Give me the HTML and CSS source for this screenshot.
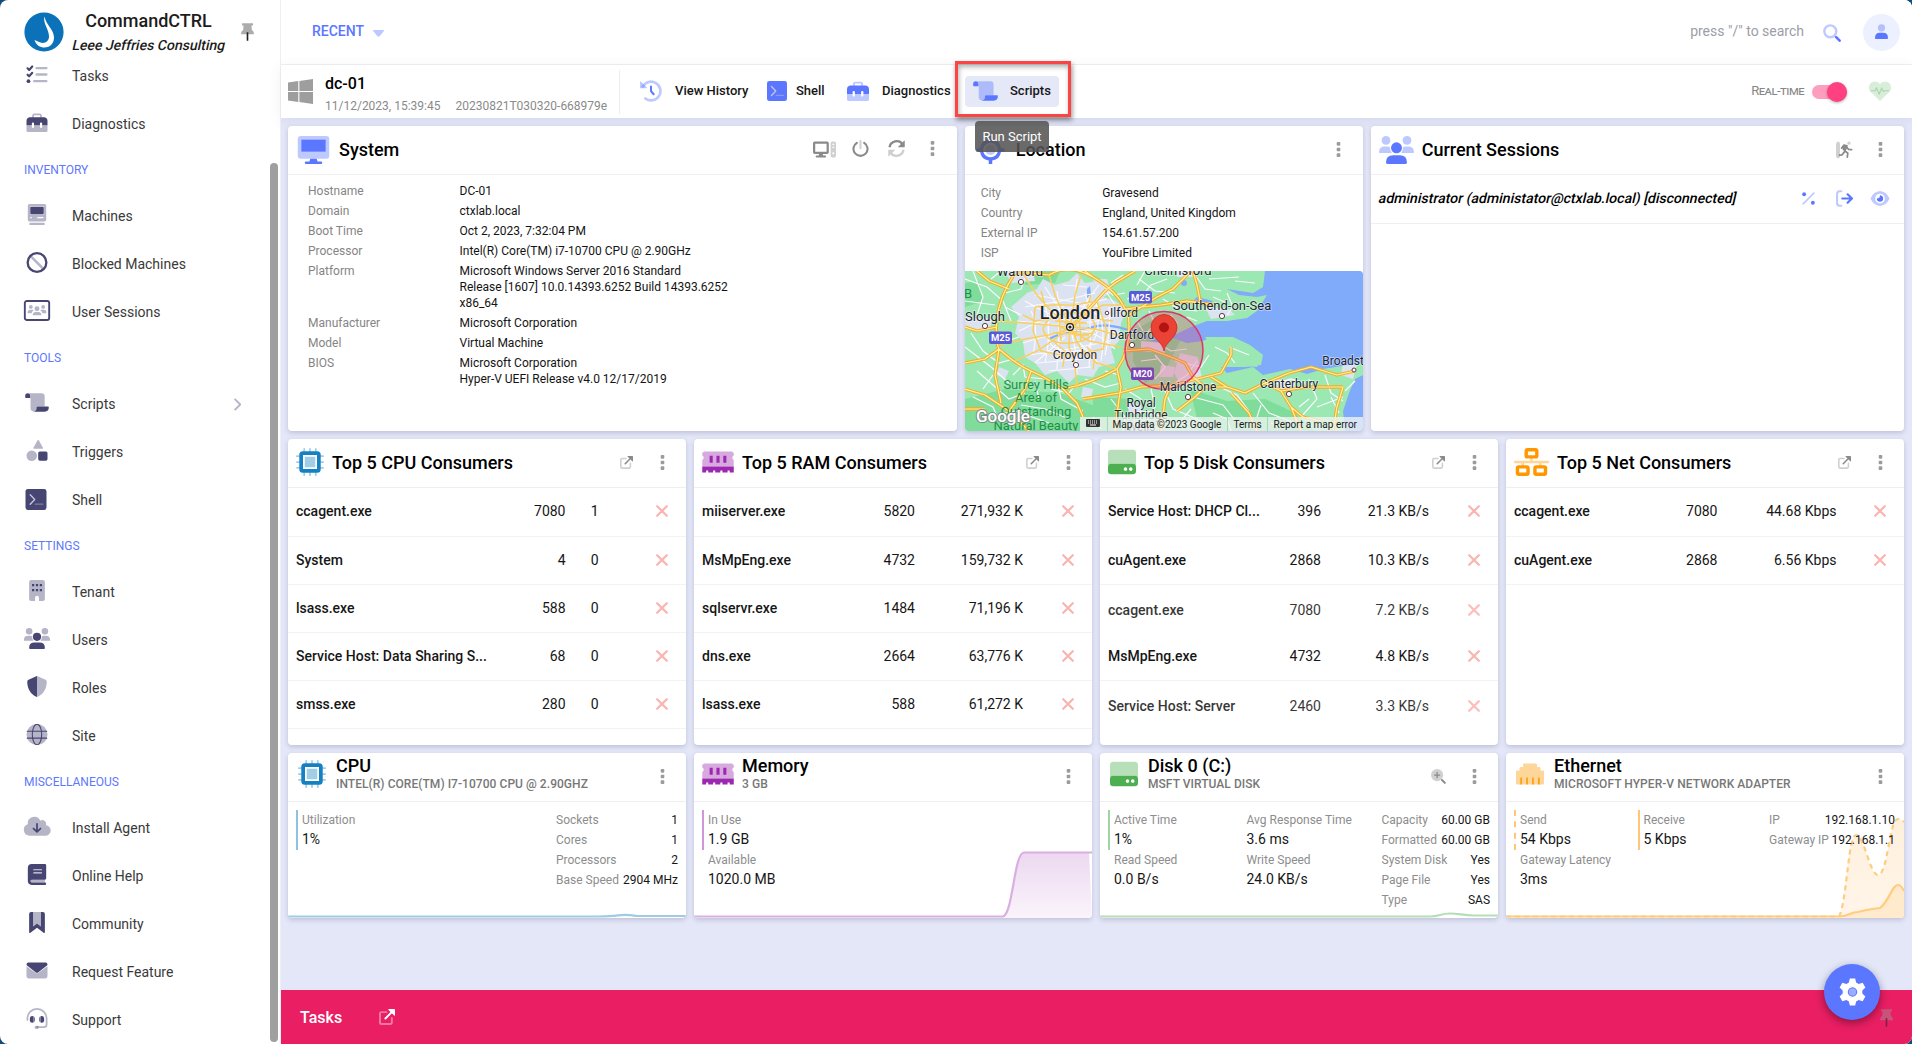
FILE: index.html
```html
<!DOCTYPE html>
<html lang="en">
<head>
<meta charset="utf-8">
<title>CommandCTRL - dc-01</title>
<link rel="stylesheet" href="styles.css">
</head>
<body>
<svg class="defs" width="0" height="0">
  <symbol id="tasks" viewBox="0 0 512 512"><g class="ln" stroke-width="52"><path d="M25 105l40 40 75-85M25 260l40 40 75-85"/></g><circle cx="48" cy="420" r="46"/><g class="ln s" stroke-width="56"><path d="M245 102h240M245 256h240M188 418h297"/></g></symbol>
  <symbol id="toolbox" viewBox="0 0 512 512"><path class="ln s" stroke-width="44" d="M160 130V90q0-30 30-30h132q30 0 30 30v40"/><path fill-rule="evenodd" d="M75 130h362q75 10 75 90v105H382v-45q0-26-27-26t-27 26v45H184v-45q0-26-27-26t-27 26v45H0V220q0-80 75-90z"/><path class="s" d="M0 325h130v38q0 26 27 26t27-26v-38h144v38q0 26 27 26t27-26v-38h130v130q0 33-33 33H33q-33 0-33-33z"/></symbol>
  <symbol id="machine" viewBox="0 0 448 512"><path class="s" fill-rule="evenodd" d="M40 0h368q40 0 40 40v345q0 40-40 40H40q-40 0-40-40V40Q0 0 40 0zM60 55v200h328V55zM230 315v32h150v-32zM60 315v32h36v-32zM40 455h368v57H40z"/><rect x="60" y="65" width="328" height="185" rx="25"/></symbol>
  <symbol id="ban" viewBox="0 0 512 512"><path class="ln s" stroke-width="62" d="M125 125l262 262"/><circle class="ln" stroke-width="56" cx="256" cy="256" r="228"/></symbol>
  <symbol id="sessions" viewBox="0 0 640 512"><rect class="ln" stroke-width="46" x="23" y="23" width="594" height="466" rx="50"/><g class="s"><circle cx="170" cy="170" r="46"/><circle cx="470" cy="170" r="46"/><circle cx="320" cy="215" r="60"/><path d="M215 370q0-80 75-80h60q75 0 75 80zM90 320q0-80 70-80h45q25 0 35 18-50 18-50 62zM550 320q0-80-70-80h-45q-25 0-35 18 50 18 50 62z"/></g></symbol>
  <symbol id="scroll" viewBox="0 0 576 512"><path class="s" d="M70 28H400q75 0 75 76v248H275v48q0 75-60 75-85 0-85-85V104q0-76-60-76z"/><path d="M0 95q0-65 62-65t62 65v50H20q-20 0-20-20zM275 372q0-17 20-17h264q17 0 17 17 0 105-100 108H195q80-6 80-85z"/></symbol>
  <symbol id="shapes" viewBox="0 0 512 512"><path class="s" d="M267 15q18-28 36 0l95 170q16 30-18 30H188q-32 0-16-30z"/><circle class="s" cx="128" cy="384" r="128"/><rect x="285" y="278" width="227" height="227" rx="40"/></symbol>
  <symbol id="shell" viewBox="0 0 512 512"><rect width="512" height="512" rx="60"/><g class="ln shell-ln" stroke-width="34"><path d="M115 140l110 115-110 115"/><path class="dim" d="M240 370h180"/></g></symbol>
  <symbol id="building" viewBox="0 0 384 512"><path class="s" d="M48 0h288q48 0 48 48v416q0 48-48 48h-96v-80q0-48-48-48t-48 48v80H48q-48 0-48-48V48Q0 0 48 0z"/><path d="M70 96h54v54H70zM165 96h54v54h-54zM260 96h54v54h-54zM70 222h54v54H70zM165 222h54v54h-54zM260 222h54v54h-54z"/></symbol>
  <symbol id="users" viewBox="0 0 640 512"><g class="s"><circle cx="128" cy="80" r="80"/><circle cx="512" cy="80" r="80"/><path d="M0 298q0-108 107-108h43q30 0 52 14-6 62 33 108H14q-14 0-14-14zM640 298q0-108-107-108h-43q-30 0-52 14 6 62-33 108h221q14 0 14-14z"/></g><circle cx="320" cy="216" r="100"/><path d="M128 485q0-133 133-133h118q133 0 133 133 0 27-27 27H155q-27 0-27-27z"/></symbol>
  <symbol id="shield" viewBox="0 0 512 512"><path d="M256 0v512C100 450 20 310 18 140q0-36 30-48L240 4q8-4 16-4z"/><path class="s" d="M256 0v512c156-62 236-202 238-372q0-36-30-48L272 4q-8-4-16-4z"/></symbol>
  <symbol id="globe" viewBox="0 0 512 512"><circle class="s" cx="256" cy="256" r="256"/><g class="ln" stroke-width="26"><path d="M18 175h476M18 345h476"/><ellipse cx="256" cy="256" rx="115" ry="250"/></g></symbol>
  <symbol id="cloud" viewBox="0 0 640 512"><path class="s" d="M144 480A144 144 0 0 1 96 200 160 160 0 0 1 400 113a96 96 0 0 1 139 112A128 128 0 0 1 512 480z"/><path class="ln" stroke-width="42" d="M320 190v185M235 305l85 82 85-82"/></symbol>
  <symbol id="book" viewBox="0 0 448 512"><path d="M96 0h320q32 0 32 32v320q0 25-32 32H96q-32 3-32 32 0 32 32 32h320q32 0 32 32t-32 32H96Q0 505 0 416V96Q0 0 96 0z"/><path class="s" d="M96 384h320v64H96q-32 0-32-32t32-32z"/><path d="M145 140h190M145 215h190" stroke="#dcdce8" stroke-width="28" stroke-linecap="round"/></symbol>
  <symbol id="bookmark" viewBox="0 0 384 512"><path class="s" d="M96 0h192v355l-96-75-96 75z"/><path d="M48 0h48v355l96-75 96 75V0h48q48 0 48 48v440q0 36-32 18L192 385 32 506Q0 524 0 488V48Q0 0 48 0z"/></symbol>
  <symbol id="envelope" viewBox="0 0 512 512"><path class="s" d="M0 150l230 165q26 18 52 0l230-165v234q0 64-64 64H64q-64 0-64-64z"/><path d="M48 60h416q48 0 48 48 0 20-20 35L282 305q-26 18-52 0L20 143Q0 128 0 108 0 60 48 60z"/></symbol>
  <symbol id="headset" viewBox="0 0 512 512"><path class="ln s" stroke-width="42" d="M22 290v-34a234 234 0 0 1 468 0v145q0 65-65 65H260"/><path class="s" d="M200 430h90v82h-50q-45 0-45-41t45-41z"/><rect x="82" y="195" width="118" height="165" rx="58"/><rect x="312" y="195" width="118" height="165" rx="58"/><path fill="#fff" opacity=".6" d="M165 195h14v165h-14zM333 195h14v165h-14z"/></symbol>
  <symbol id="pin" viewBox="0 0 384 512"><path class="s2" d="M30 0h324v64h-45l12 135q60 33 63 105 0 20-20 20H20Q0 324 0 304q3-72 63-105L75 64H30z"/><path class="pin-needle" d="M168 260h48v252h-48z"/></symbol>
  <symbol id="history" viewBox="0 0 512 512"><path class="ln s" stroke-width="62" d="M65 155A218 218 0 1 1 125 430"/><path class="s" d="M0 45q0-20 18-8l145 135q12 18-10 20H20q-20 0-20-20z"/><path class="ln" stroke-width="46" d="M256 150v110l62 72"/></symbol>
  <symbol id="search" viewBox="0 0 512 512"><circle class="ln s" stroke-width="68" cx="208" cy="208" r="170"/><path class="ln" stroke-width="74" d="M375 375l98 98"/></symbol>
  <symbol id="user" viewBox="0 0 448 512"><circle class="s" cx="224" cy="130" r="125"/><path d="M0 480q0-180 170-180h108q170 0 170 180 0 32-32 32H32q-32 0-32-32z"/></symbol>
  <symbol id="windows" viewBox="0 0 448 448"><path d="M0 63l184-26v178H0zM204 34L448 0v215H204zM0 235h184v178L0 387zM204 235h244v213l-244-34z"/></symbol>
  <symbol id="heart" viewBox="0 0 512 512"><path class="hs" d="M256 490L40 282C-22 215-10 100 65 55 135 15 210 40 256 95 302 40 377 15 447 55c75 45 87 160 25 227z"/><path class="ln" stroke-width="26" d="M50 250h90l35-70 60 150 60-145 35 85 25-20h100"/></symbol>
  <symbol id="monitor" viewBox="0 0 576 512"><path class="s" fill-rule="evenodd" d="M60 0h456q60 0 60 60v296q0 60-60 60H60q-60 0-60-60V60Q0 0 60 0zM64 64v224h448V64z"/><path d="M64 64h448v224H64zM230 416h116l16 48h62q24 0 24 24t-24 24H152q-24 0-24-24t24-24h62z"/></symbol>
  <symbol id="desktop" viewBox="0 0 640 512"><path fill-rule="evenodd" d="M50 32h340q50 0 50 50v252q0 50-50 50H270l12 40h60q24 0 24 28t-24 28H98q-24 0-24-28t24-28h60l12-40H50q-50 0-50-50V82q0-50 50-50zM62 96v224h316V96z"/><path class="s" fill-rule="evenodd" d="M540 32h50q50 0 50 50v348q0 50-50 50h-50q-50 0-50-50V82q0-50 50-50zM540 96v34h50V96zM540 180v34h50v-34zM565 330a30 30 0 1 0 .1 0z"/></symbol>
  <symbol id="power" viewBox="0 0 512 512"><path class="ln" stroke-width="62" d="M145 85a212 212 0 1 0 222 0"/><path class="ln s" stroke-width="60" d="M256 32v220"/></symbol>
  <symbol id="refresh" viewBox="0 0 512 512"><path class="ln butt" stroke-width="68" d="M45 220C80 20 330-20 430 120"/><path d="M505 30v170q0 22-22 22H315q-20-5-8-22L485 20q20-8 20 10z"/><g class="s"><path class="ln butt" stroke-width="68" d="M467 292C432 492 182 532 82 392"/><path d="M7 482V312q0-22 22-22h168q20 5 8 22L27 492q-20 8-20-10z"/></g></symbol>
  <symbol id="kebab" viewBox="0 0 128 512"><rect class="s2" y="32" x="10" width="108" height="108" rx="24"/><rect class="s2" y="202" x="10" width="108" height="108" rx="24"/><rect class="s2" y="372" x="10" width="108" height="108" rx="24"/></symbol>
  <symbol id="location" viewBox="0 0 512 512"><path fill-rule="evenodd" d="M224 0h64v64q140 20 160 160h64v64h-64q-20 140-160 160v64h-64v-64Q84 428 64 288H0v-64h64Q84 84 224 64zM256 122a134 134 0 1 0 .1 0z"/><circle class="s" cx="256" cy="256" r="92"/></symbol>
  <symbol id="door" viewBox="0 0 512 512"><path class="s" d="M60 0q60 10 60 60v392q0 50-60 60-60-20-60-90V90Q0 20 60 0z"/><circle class="s" cx="390" cy="50" r="48"/><g class="ln" stroke-width="52"><path d="M170 200l70-90 90 20-70 150 95 70-15 120M245 320l-60 80-80 10M320 170l60 70 90 5"/></g><path d="M225 110l110 15-50 175-90-50z"/></symbol>
  <symbol id="percent" viewBox="0 0 448 512"><path class="ln s" stroke-width="56" d="M405 75L43 437"/><circle cx="75" cy="110" r="66"/><circle cx="373" cy="402" r="66"/></symbol>
  <symbol id="exit" viewBox="0 0 512 512"><path class="ln s" stroke-width="62" d="M160 40h-50q-78 0-78 78v276q0 78 78 78h50"/><path class="ln" stroke-width="66" d="M190 256h285M350 130l130 126-130 126"/></symbol>
  <symbol id="eye" viewBox="0 0 576 512"><path class="s" fill-rule="evenodd" d="M288 32Q100 45 0 256q100 211 288 224 188-13 288-224Q476 45 288 32zM288 112a144 144 0 1 1-.1 0z"/><path d="M288 160q0 96-96 96 5 96 96 96t96-96q-5-90-96-96z"/></symbol>
  <symbol id="cpu" viewBox="0 0 512 512"><path class="ln s" stroke-width="32" d="M150 16v70M256 16v70M362 16v70M150 426v70M256 426v70M362 426v70M16 150h70M16 256h70M16 362h70M426 150h70M426 256h70M426 362h70"/><path fill-rule="evenodd" d="M124 60h264q64 0 64 64v264q0 64-64 64H124q-64 0-64-64V124q0-64 64-64zM128 128v256h256V128z"/><rect class="s" x="160" y="160" width="192" height="192"/></symbol>
  <symbol id="ram" viewBox="0 0 576 512"><path class="s" d="M50 64h476q50 0 50 50v25q-55 35 0 85v116H0V224q55-50 0-85v-25q0-50 50-50z"/><path d="M135 140h56v130h-56zM260 140h56v130h-56zM385 140h56v130h-56zM0 340h576v108h-75v-35h-38v35h-94v-35h-38v35h-94v-35h-38v35h-90v-35H71v35H0z"/></symbol>
  <symbol id="disk" viewBox="0 0 512 512"><path class="s" d="M60 32h392q60 0 60 60v230q-20-34-60-34H60q-40 0-60 34V92q0-60 60-60z"/><path fill-rule="evenodd" d="M60 288h392q60 0 60 60v72q0 60-60 60H60q-60 0-60-60v-72q0-60 60-60zM320 352a32 32 0 1 0 .1 0zM416 352a32 32 0 1 0 .1 0z"/></symbol>
  <symbol id="network" viewBox="0 0 640 512"><path class="s" d="M16 232h608q16 0 16 24t-16 24H504v50h-48v-50H184v50h-48v-50H16Q0 280 0 256t16-24zM296 170h48v70h-48z"/><g class="ln" stroke-width="62"><rect x="223" y="31" width="194" height="132" rx="22"/><rect x="63" y="345" width="194" height="136" rx="22"/><rect x="383" y="345" width="194" height="136" rx="22"/></g></symbol>
  <symbol id="ethernet" viewBox="0 0 512 512"><path class="s" d="M0 216q0-24 24-24h40v-40q0-24 24-24h40V88q0-24 24-24h208q24 0 24 24v40h40q24 0 24 24v40h40q24 0 24 24v208q0 24-24 24H24q-24 0-24-24z"/><path d="M80 320h28v128H80zM188 320h28v128h-28zM296 320h28v128h-28zM404 320h28v128h-28z"/></symbol>
  <symbol id="external" viewBox="0 0 512 512"><path class="ln s" stroke-width="62" d="M240 100H80q-48 0-48 48v280q0 50 48 50h280q50 0 50-50V290"/><path class="ln" stroke-width="62" d="M205 305L440 70"/><path d="M310 0h178q24 0 24 24v178q-5 24-28 8L302 28q-12-20 8-28z"/></symbol>
  <symbol id="xmark" viewBox="0 0 320 320"><path class="ln" stroke-width="60" d="M32 32l256 256M288 32L32 288"/></symbol>
  <symbol id="zoomin" viewBox="0 0 512 512"><circle class="s" cx="208" cy="208" r="208"/><path class="ln" stroke-width="44" d="M208 120v176M120 208h176"/><path class="ln" stroke-width="68" d="M375 375l98 98"/></symbol>
  <symbol id="gear" viewBox="0 0 512 512"><path fill-rule="evenodd" d="M205 0h102l18 78 48 28 76-24 51 90-58 54v60l58 54-51 90-76-24-48 28-18 78H205l-18-78-48-28-76 24-51-90 58-54v-60L12 172l51-90 76 24 48-28zM256 166a90 90 0 1 0 .1 0z"/><circle class="s" cx="256" cy="256" r="70"/></symbol>
  <symbol id="chevron" viewBox="0 0 256 512"><path class="ln butt" stroke-width="62" d="M30 60l190 196L30 452"/></symbol>
</svg>

<div class="app">
  <aside class="sidebar">
    <header class="brand">
      <svg class="logo" viewBox="0 0 40 40"><circle cx="20" cy="20" r="19.6" fill="#0b72b9"/><path d="M20.500 4.500C18.500 11 25 17 25 24.500C25 29.500 20.500 32 16.500 30.500C13.500 29.500 12 28.500 10.500 28C12 33 16 35.500 20.500 35.500C26 35.500 30 31.500 30 25.500C30 17.500 22 13 20.500 4.500Z" fill="#fff"/></svg>
      <div class="brand-text"><div class="brand-name">CommandCTRL</div><div class="brand-org slant">Leee Jeffries Consulting</div></div>
      <svg class="brand-pin"><use href="#pin"/></svg>
    </header>
    <div class="nav-wrap">
      <nav class="nav">
        <a class="nav-item"><svg><use href="#tasks"/></svg><span>Tasks</span></a>
        <a class="nav-item"><svg><use href="#toolbox"/></svg><span>Diagnostics</span></a>
        <h4>INVENTORY</h4>
        <a class="nav-item"><svg><use href="#machine"/></svg><span>Machines</span></a>
        <a class="nav-item"><svg><use href="#ban"/></svg><span>Blocked Machines</span></a>
        <a class="nav-item"><svg><use href="#sessions"/></svg><span>User Sessions</span></a>
        <h4>TOOLS</h4>
        <a class="nav-item"><svg><use href="#scroll"/></svg><span>Scripts</span><svg class="chev"><use href="#chevron"/></svg></a>
        <a class="nav-item"><svg><use href="#shapes"/></svg><span>Triggers</span></a>
        <a class="nav-item"><svg class="nudge"><use href="#shell"/></svg><span>Shell</span></a>
        <h4>SETTINGS</h4>
        <a class="nav-item"><svg><use href="#building"/></svg><span>Tenant</span></a>
        <a class="nav-item"><svg><use href="#users"/></svg><span>Users</span></a>
        <a class="nav-item"><svg><use href="#shield"/></svg><span>Roles</span></a>
        <a class="nav-item"><svg><use href="#globe"/></svg><span>Site</span></a>
        <h4>MISCELLANEOUS</h4>
        <a class="nav-item"><svg><use href="#cloud"/></svg><span>Install Agent</span></a>
        <a class="nav-item"><svg><use href="#book"/></svg><span>Online Help</span></a>
        <a class="nav-item"><svg><use href="#bookmark"/></svg><span>Community</span></a>
        <a class="nav-item"><svg><use href="#envelope"/></svg><span>Request Feature</span></a>
        <a class="nav-item"><svg><use href="#headset"/></svg><span>Support</span></a>
      </nav>
      <div class="rail"><div class="thumb"></div></div>
    </div>
  </aside>

  <div class="main">
    <header class="topbar">
      <div class="recent">RECENT <i class="caret"></i></div>
      <div class="search">press "/" to search</div>
      <svg class="search-icon"><use href="#search"/></svg>
      <div class="avatar"><svg><use href="#user"/></svg></div>
    </header>

    <div class="devicebar">
      <svg class="os"><use href="#windows"/></svg>
      <div class="device">
        <div class="device-name">dc-01</div>
        <div class="device-meta"><span>11/12/2023, 15:39:45</span><span>20230821T030320-668979e</span></div>
      </div>
      <div class="tools">
        <button class="tool history"><svg><use href="#history"/></svg>View History</button>
        <button class="tool term"><svg><use href="#shell"/></svg>Shell</button>
        <button class="tool diag"><svg><use href="#toolbox"/></svg>Diagnostics</button>
        <button class="tool scripts"><svg><use href="#scroll"/></svg>Scripts<span class="highlight"></span><span class="tooltip">Run Script</span></button>
      </div>
      <span class="rt">Real-time</span>
      <span class="toggle"><i></i></span>
      <svg class="heart"><use href="#heart"/></svg>
    </div>

    <main class="grid">
      <section class="card c-system">
        <header class="head tall"><svg class="hi fw blue"><use href="#monitor"/></svg><h2>System</h2>
          <div class="acts"><svg class="w22"><use href="#desktop"/></svg><svg><use href="#power"/></svg><svg><use href="#refresh"/></svg><svg><use href="#kebab"/></svg></div></header>
        <dl class="facts sys">
          <dt>Hostname</dt><dd>DC-01</dd>
          <dt>Domain</dt><dd>ctxlab.local</dd>
          <dt>Boot Time</dt><dd>Oct 2, 2023, 7:32:04 PM</dd>
          <dt>Processor</dt><dd>Intel(R) Core(TM) i7-10700 CPU @ 2.90GHz</dd>
          <dt>Platform</dt><dd>Microsoft Windows Server 2016 Standard<br>Release [1607] 10.0.14393.6252 Build 14393.6252<br>x86_64</dd>
          <dt>Manufacturer</dt><dd>Microsoft Corporation</dd>
          <dt>Model</dt><dd>Virtual Machine</dd>
          <dt>BIOS</dt><dd>Microsoft Corporation<br>Hyper-V UEFI Release v4.0 12/17/2019</dd>
        </dl>
      </section>

      <section class="card c-location">
        <header class="head tall"><svg class="hi fw blue"><use href="#location"/></svg><h2>Location</h2><div class="acts"><svg><use href="#kebab"/></svg></div></header>
        <dl class="facts loc">
          <dt>City</dt><dd>Gravesend</dd>
          <dt>Country</dt><dd>England, United Kingdom</dd>
          <dt>External IP</dt><dd>154.61.57.200</dd>
          <dt>ISP</dt><dd>YouFibre Limited</dd>
        </dl>
        <svg class="map" viewBox="0 0 398 160">
          <defs><path id="roads" d="M50 2Q34 26 32 48T34 78Q52 94 66 100T98 118Q128 112 152 98L158 88Q164 74 164 56T160 38Q152 20 128 6T84 4M32 56L12 60L0 56M34 78L20 88L0 92M44 18L24 10L12 0M0 118L20 124L44 140L64 160M98 118L112 132L118 146M152 98L156 116L154 128L150 160M158 80L184 78L206 86L220 92L228 106L240 116L262 116L280 122L300 112L324 102M160 38L176 36L196 34L222 30L250 34M164 44L192 26L208 18L226 0M106 56L122 40L140 20L150 12L170 0M228 0L232 14L236 34M154 122L176 116L208 114L240 106L256 102L266 84L266 76M206 114L200 128L196 160M324 102L346 96L372 104L390 100M300 112L316 120L340 116L378 116M316 120L326 136L338 146L356 150M378 116L372 136L368 160M118 128L154 122M240 116L230 126L212 140M266 122L284 142L292 160M0 138L20 138M84 4L64 2L50 2M34 78L30 104L36 132M66 100L60 118L44 140M128 6L120 0M262 116L246 106M336 160L326 136"/></defs>
          <rect width="398" height="160" fill="#9ce8b2"/>
          <g fill="#7fdc9a"><path d="M0 128L40 118L95 122L130 135L128 160H0zM60 0L95 0L90 12L60 14zM128 126L165 128L170 160H128zM225 118L262 130L300 128L330 142L350 160H235zM0 12L14 10L18 30L0 36zM168 60L200 42L215 70L200 100L180 112L168 90z"/></g>
          <path fill="#dbe3f1" d="M62 22L72 18L78 8L90 14L104 10L112 2L120 12L132 10L138 26L150 30L162 38L156 52L154 70L146 78L150 92L134 96L128 106L112 104L104 112L92 100L80 104L70 92L60 86L58 70L50 62L54 46L46 36z"/>
          <path fill="#dbe3f1" d="M128 8l14 0 4 14-12 6zM215 82l18 4 4 22-20 8-8-14zM240 36l24 2 6 6-24 4zM0 46l28 2-4 12-24-2zM40 0l28 0 2 10-24 2zM212 0l20 0-2 6-18 0zM312 108l18 2 0 10-18 0zM378 92l14 2-4 14-12-4zM176 70l22 2 2 10-24-2zM196 94l14 2-2 10-14 0zM118 116l10 2-2 10-10-2zM34 96l10 4-4 8-8-4zM162 132l14 2 0 10-12-2z"/>
          <g fill="#80abfb">
            <path d="M300 0H398V92L384 94L358 98L342 103L325 98L298 104L288 96L262 102L256 96L280 96L296 94L298 84L285 74L268 66L246 66L238 70L222 72L205 66L226 56L242 50L262 50L282 47L292 40L302 24L292 26L274 24L262 18L288 22L298 16z"/>
            <path d="M398 92V160H380L378 140L384 122L390 108L398 104z"/>
            <circle cx="219" cy="12" r="3"/><path d="M122 18l3-3 1 8-4 4zM232 26l16 4-6 6-14-6z"/>
          </g>
          <path fill="none" stroke="#80abfb" stroke-width="2.2" d="M206 69Q190 72 182 66T160 58Q140 52 128 56T106 60Q96 62 84 68"/>
          <path fill="#9ce8b2" d="M240 66l18 0 24 10 14 12-4 8-20-2-18-10z"/>
          <g fill="none" stroke="#fbf8ff" stroke-width="1.2">
            <path d="M60 30Q85 45 105 50T150 44M52 50Q80 52 105 56T156 62M58 72Q82 64 105 60T150 78M70 92Q86 78 100 66M112 104Q112 80 106 60M135 94Q120 78 108 64M80 16Q92 34 102 50M112 8Q110 30 106 50M134 14Q120 32 110 50M66 40Q74 54 68 84M78 28Q88 54 80 92M92 20Q96 40 92 98M120 22Q128 44 124 96M130 30Q142 54 136 90M144 36Q146 60 140 84M54 60L100 38L142 28M64 84L104 78L146 70M72 92L118 88M70 24L136 36M60 36L96 30L130 22M84 100L126 96M98 14L122 16M100 34Q120 32 132 44Q136 62 124 76Q104 86 86 74Q80 56 86 44z"/>
            <path d="M0 8L22 16L38 30L46 50M8 0L18 26L12 44M0 30L30 34M6 62L18 80L34 92L48 88M0 76L26 96L44 112M12 100L44 128L60 122M22 146L50 140L84 152M92 108L96 128L118 140M70 110L74 128M120 108L140 116L156 112M146 128L160 146L158 160M186 118L190 136L182 150M200 120L208 138L232 148L252 160M228 126L258 134L272 152M246 112L272 124L284 140M288 122L304 142L330 152M344 108L352 128L336 146M360 104L366 122L378 130M190 84L200 96L190 108M176 90L192 88M210 90L236 96L244 84M146 12L158 4M162 28L178 24L186 14L202 8M174 8L190 20L210 22M230 4L240 18L256 20M198 28L214 38L232 40M244 8L274 6M180 0L172 14M262 22L268 36L262 44M264 76L284 84M306 114L326 108L340 112M352 136L378 126M140 100L154 104M160 118L176 128M210 112L222 104L232 90"/>
            <path d="M24 64L36 72L54 66M40 36L56 44M26 8L36 0M60 6L56 18L40 22M48 104L58 94L60 106L80 108M86 118L104 122L112 112M136 12L148 24L160 22M150 34L142 22M28 104L18 118M8 126L28 136L34 150M56 134L80 138L104 148M128 146L136 158M166 142L184 140L196 146M216 150L226 138M248 142L262 148L266 160M296 134L292 146M306 152L322 158M344 128L334 136M366 126L374 142M390 110L380 120M250 76L262 82L270 92M222 46L232 50M206 44L212 52L202 60M184 40L190 52L182 62M172 50L178 60M196 74L206 80L222 78M172 104L184 106M270 10L290 12M248 26L262 32"/>
          </g>
          <use href="#roads" class="road-edge"/>
          <use href="#roads" class="road-core"/>
          <g fill="none" stroke="#f9cf5d" stroke-width="1.5">
            <path d="M32 50L60 52L84 54L105 56L130 58L160 66M34 74L60 68L84 64L105 58L124 70L156 76M84 4L90 24L98 42L105 56L104 76L110 94L112 118M56 0L72 24L88 42L105 56L120 44L138 34L160 34M50 90L72 80L90 68L105 56M116 4L110 24L108 40L105 56L116 78L132 92L152 98M70 36L88 34L110 34L132 30M70 36L68 60L76 80L96 84L118 82L138 78L142 60L132 30M78 58Q82 44 104 42T130 54Q130 70 106 72T78 58M90 50L122 52M88 62L124 64M94 46L96 70M114 44L116 70M96 56L112 64L128 62M100 48L112 56L110 68M90 72L100 80L98 96M122 76L130 84L128 98M58 44L70 50L84 48M132 48L148 50M126 24L122 38M76 20L80 34"/>
          </g>
          <circle cx="199" cy="79.500" r="39" fill="#e0446a" fill-opacity=".3" stroke="#e0336b" stroke-width="1.5"/>
          <g fill="#5b59d8"><rect x="164" y="20" width="23" height="12.500" rx="2"/><rect x="24" y="60.500" width="23" height="12.500" rx="2"/></g><rect x="166" y="96.500" width="23" height="12.500" rx="2" fill="#7a45b4"/>
          <g class="shield-t"><text x="175.500" y="29.700">M25</text><text x="35.500" y="70.200">M25</text><text x="177.500" y="106.200">M20</text></g>
          <g class="area"><text x="71" y="117.500">Surrey Hills</text><text x="71" y="131">Area of</text><text x="71" y="145">Outstanding</text><text x="71" y="158.500">Natural Beauty</text><text x="3" y="27">B</text></g>
          <g class="place"><text class="b" x="55" y="5">Watford</text><text class="b" x="213" y="4">Chelmsford</text><text class="b" x="257" y="39">Southend-on-Sea</text><text class="city" x="105" y="47.500">London</text><text x="159" y="46">Ilford</text><text class="b" x="20" y="49.500">Slough</text><text x="167" y="68">Dartford</text><text x="110" y="88">Croydon</text><text x="223" y="120">Maidstone</text><text x="324" y="117">Canterbury</text><text x="388" y="94">Broadstairs</text><text x="176" y="136">Royal</text><text x="176" y="148">Tunbridge</text><text x="176" y="160">Wells</text></g>
          <g fill="#fff" stroke="#5c3a48" stroke-width="1"><circle cx="56" cy="11" r="2.600"/><circle cx="142" cy="42" r="1.800"/><circle cx="20" cy="55" r="2.600"/><circle cx="257" cy="45" r="2.600"/><circle cx="167" cy="74" r="2.600"/><circle cx="111" cy="94" r="2.600"/><circle cx="223" cy="126" r="2.600"/><circle cx="324" cy="123" r="2.600"/><circle cx="389" cy="99" r="2"/></g>
          <circle cx="105" cy="56" r="3.400" fill="#fff" stroke="#222" stroke-width="1.300"/><circle cx="105" cy="56" r="1.600" fill="#222"/>
          <path d="M199 80C198 71 186 67 186 56.500A13 13 0 0 1 212 56.500C212 67 200 71 199 80Z" fill="#ea4335" stroke="#c5221f" stroke-width=".7"/><circle cx="199" cy="56.500" r="5" fill="#b31412"/>
          <text class="google" x="11" y="151">Google</text>
          <rect x="115" y="146" width="283" height="14" fill="#f5f5f5" fill-opacity=".76"/>
          <path d="M142.500 146v14M262.500 146v14M302.500 146v14" stroke="#9adfae"/>
          <rect x="121" y="148" width="14" height="8" rx="1" fill="#333"/><path d="M123 150h10M123 152h10" stroke="#fff" stroke-dasharray="1 1"/><path d="M125 154h6" stroke="#fff"/>
          <g class="attr"><text x="147.500" y="156.500">Map data ©2023 Google</text><text x="268.500" y="156.500">Terms</text><text x="308.500" y="156.500">Report a map error</text></g>
        </svg>
      </section>

      <section class="card c-sessions">
        <header class="head tall"><svg class="hi fw blue"><use href="#users"/></svg><h2>Current Sessions</h2><div class="acts"><svg class="w19"><use href="#door"/></svg><svg><use href="#kebab"/></svg></div></header>
        <div class="session"><span class="who slant">administrator (administator@ctxlab.local) [disconnected]</span><div class="acts blue"><svg class="w14"><use href="#percent"/></svg><svg><use href="#exit"/></svg><svg class="w20"><use href="#eye"/></svg></div></div>
      </section>

      <section class="card top cpu">
        <header class="head"><svg class="hi c-cpu w28"><use href="#cpu"/></svg><h2>Top 5 CPU Consumers</h2><div class="acts"><svg class="w13"><use href="#external"/></svg><svg><use href="#kebab"/></svg></div></header>
        <div class="row"><b>ccagent.exe</b><span>7080</span><span>1</span><svg><use href="#xmark"/></svg></div>
        <div class="row"><b>System</b><span>4</span><span>0</span><svg><use href="#xmark"/></svg></div>
        <div class="row"><b>lsass.exe</b><span>588</span><span>0</span><svg><use href="#xmark"/></svg></div>
        <div class="row"><b>Service Host: Data Sharing S...</b><span>68</span><span>0</span><svg><use href="#xmark"/></svg></div>
        <div class="row"><b>smss.exe</b><span>280</span><span>0</span><svg><use href="#xmark"/></svg></div>
      </section>
      <section class="card top ram">
        <header class="head"><svg class="hi c-ram w32"><use href="#ram"/></svg><h2>Top 5 RAM Consumers</h2><div class="acts"><svg class="w13"><use href="#external"/></svg><svg><use href="#kebab"/></svg></div></header>
        <div class="row"><b>miiserver.exe</b><span>5820</span><span>271,932 K</span><svg><use href="#xmark"/></svg></div>
        <div class="row"><b>MsMpEng.exe</b><span>4732</span><span>159,732 K</span><svg><use href="#xmark"/></svg></div>
        <div class="row"><b>sqlservr.exe</b><span>1484</span><span>71,196 K</span><svg><use href="#xmark"/></svg></div>
        <div class="row"><b>dns.exe</b><span>2664</span><span>63,776 K</span><svg><use href="#xmark"/></svg></div>
        <div class="row"><b>lsass.exe</b><span>588</span><span>61,272 K</span><svg><use href="#xmark"/></svg></div>
      </section>
      <section class="card top dsk">
        <header class="head"><svg class="hi c-disk w28"><use href="#disk"/></svg><h2>Top 5 Disk Consumers</h2><div class="acts"><svg class="w13"><use href="#external"/></svg><svg><use href="#kebab"/></svg></div></header>
        <div class="row"><b>Service Host: DHCP Cl...</b><span>396</span><span>21.3 KB/s</span><svg><use href="#xmark"/></svg></div>
        <div class="row"><b>cuAgent.exe</b><span>2868</span><span>10.3 KB/s</span><svg><use href="#xmark"/></svg></div>
        <div class="row entering"><b>ccagent.exe</b><span>7080</span><span>7.2 KB/s</span><svg><use href="#xmark"/></svg></div>
        <div class="row"><b>MsMpEng.exe</b><span>4732</span><span>4.8 KB/s</span><svg><use href="#xmark"/></svg></div>
        <div class="row entering"><b>Service Host: Server</b><span>2460</span><span>3.3 KB/s</span><svg><use href="#xmark"/></svg></div>
      </section>
      <section class="card top net">
        <header class="head"><svg class="hi c-net w35"><use href="#network"/></svg><h2>Top 5 Net Consumers</h2><div class="acts"><svg class="w13"><use href="#external"/></svg><svg><use href="#kebab"/></svg></div></header>
        <div class="row"><b>ccagent.exe</b><span>7080</span><span>44.68 Kbps</span><svg><use href="#xmark"/></svg></div>
        <div class="row"><b>cuAgent.exe</b><span>2868</span><span>6.56 Kbps</span><svg><use href="#xmark"/></svg></div>
      </section>

      <section class="card perf p-cpu">
        <svg class="spark" viewBox="0 0 398 116" stroke="#9fcbe5"><path d="M0 114.500H310Q322 114.300 330 113.300T348 113.800Q360 114 398 114"/></svg>
        <header class="head"><svg class="hi c-cpu w32"><use href="#cpu"/></svg><div class="titles"><h2>CPU</h2><h3>INTEL(R) CORE(TM) I7-10700 CPU @ 2.90GHZ</h3></div><div class="acts"><svg><use href="#kebab"/></svg></div></header>
        <div class="stats"><div class="stat bar"><i>Utilization</i><b>1%</b></div>
          <dl class="spec"><dt>Sockets</dt><dd>1</dd><dt>Cores</dt><dd>1</dd><dt>Processors</dt><dd>2</dd><dt>Base Speed</dt><dd>2904 MHz</dd></dl></div>
      </section>
      <section class="card perf p-mem">
        <svg class="spark" viewBox="0 0 398 116" stroke="#d9aee2"><defs><linearGradient id="gm" x2="0" y2="1"><stop offset="0" stop-color="#ecd8f0"/><stop offset="1" stop-color="#faf4fb"/></linearGradient></defs><path fill="url(#gm)" stroke="none" d="M311 116C320 106 320 50 331 50H395L398 116z"/><path d="M0 114.500H309C319 112 320 50.500 330 50.500H398"/></svg>
        <header class="head"><svg class="hi c-ram w32"><use href="#ram"/></svg><div class="titles"><h2>Memory</h2><h3>3 GB</h3></div><div class="acts"><svg><use href="#kebab"/></svg></div></header>
        <div class="stats"><div class="stat bar"><i>In Use</i><b>1.9 GB</b></div><div class="stat"><i>Available</i><b>1020.0 MB</b></div></div>
      </section>
      <section class="card perf p-disk">
        <svg class="spark" viewBox="0 0 398 116" stroke="#b5deb8"><path d="M0 114.500H330C340 114.500 340 111.500 350 111.500S362 113.500 374 113.500H398"/></svg>
        <header class="head"><svg class="hi c-disk w32"><use href="#disk"/></svg><div class="titles"><h2>Disk 0 (C:)</h2><h3>MSFT VIRTUAL DISK</h3></div><div class="acts"><svg class="w14"><use href="#zoomin"/></svg><svg><use href="#kebab"/></svg></div></header>
        <div class="stats three"><div class="stat bar"><i>Active Time</i><b>1%</b></div><div class="stat"><i>Avg Response Time</i><b>3.6 ms</b></div><div class="stat"><i>Read Speed</i><b>0.0 B/s</b></div><div class="stat"><i>Write Speed</i><b>24.0 KB/s</b></div>
          <dl class="spec"><dt>Capacity</dt><dd>60.00 GB</dd><dt>Formatted</dt><dd>60.00 GB</dd><dt>System Disk</dt><dd>Yes</dd><dt>Page File</dt><dd>Yes</dd><dt>Type</dt><dd>SAS</dd></dl></div>
      </section>
      <section class="card perf p-net">
        <svg class="spark" viewBox="0 0 398 116" stroke="#ffcc80"><defs><linearGradient id="gn" x2="0" y2="1"><stop offset="0" stop-color="#fff0dc"/><stop offset="1" stop-color="#fff5e9"/></linearGradient></defs><path fill="url(#gn)" stroke="none" d="M333 116C341 90 342 33 350 33S364 73 372 73C382 73 383 17 392 17Q395 17 398 20V116z"/><path stroke-dasharray="5 4" d="M0 114.500H333C341 100 342 33 350 33S364 73 372 73C382 73 383 17 392 17Q395 17 398 20"/><path fill="#ffe3bb" fill-opacity=".6" stroke="none" d="M336 116L351 110L374 106C384 98 386 83 392 83L398 88V116z"/><path d="M0 114.500H334C344 114 344 110 352 110C362 107 366 107 374 106C384 98 386 83 392 83Q395 83 398 89"/></svg>
        <header class="head"><svg class="hi c-net w32"><use href="#ethernet"/></svg><div class="titles"><h2>Ethernet</h2><h3>MICROSOFT HYPER-V NETWORK ADAPTER</h3></div><div class="acts"><svg><use href="#kebab"/></svg></div></header>
        <div class="stats three"><div class="stat bar dashed"><i>Send</i><b>54 Kbps</b></div><div class="stat bar"><i>Receive</i><b>5 Kbps</b></div><div class="stat"><i>Gateway Latency</i><b>3ms</b></div>
          <dl class="spec"><dt>IP</dt><dd>192.168.1.10</dd><dt>Gateway IP</dt><dd>192.168.1.1</dd></dl></div>
      </section>
    </main>

    <footer class="taskbar"><span>Tasks</span><svg class="ext"><use href="#external"/></svg><svg class="foot-pin"><use href="#pin"/></svg>
      <button class="fab"><svg><use href="#gear"/></svg></button></footer>
  </div>
</div>
</body>
</html>
```
FILE: styles.css
```css
* { box-sizing: border-box; }
html { background: #124b78; }
body { margin: 0; font-family: Roboto, sans-serif; font-size: 14px; color: #000; overflow: hidden; }
h2, h3, h4, dl, dd { margin: 0; font-weight: 400; }
button { border: 0; background: none; padding: 0; font: inherit; }
.defs { position: absolute; }
svg { fill: currentColor; overflow: hidden; }
.ln { fill: none; stroke: currentColor; stroke-linecap: round; stroke-linejoin: round; }
.butt { stroke-linecap: butt; }
.s { opacity: .4; }
.s2 { opacity: .85; }
.slant { transform: skewX(-13deg); }

.app { display: flex; width: 1912px; height: 1044px; border-radius: 8px; overflow: hidden; background: #fff; }

/* sidebar */
.sidebar { width: 281px; flex: none; border-right: 1px solid #efeff3; display: flex; flex-direction: column; }
.brand { height: 52px; flex: none; display: flex; padding: 12px 0 0 24px; z-index: 1; }
.logo { width: 40px; height: 40px; flex: none; }
.brand-text { margin: -3px 0 0 8px; width: 154px; text-align: center; white-space: nowrap; }
.brand-name { font-size: 18px; font-weight: 500; line-height: 24px; color: #1c1c1c; margin-left: -1px; }
.brand-org { font-size: 14px; font-weight: 500; line-height: 24px; color: #1c1c1c; }
.brand-pin { width: 13px; height: 18px; margin: 11px 0 0 15px; color: #9e9e9e; }
.pin-needle { fill: #222; }
.nav-wrap { display: flex; flex: 1; }
.nav { width: 270px; color: #474673; }
.nav-item { display: flex; align-items: center; height: 48px; padding: 0 26px 0 22px; }
.nav-item svg { width: 30px; height: 21px; margin-top: -3px; }
.nav-item .nudge { margin: -2px 1px 0 -1px; }
.nav-item span { margin-left: 20px; flex: 1; color: #3a3a3a; }
.nav-item .chev { width: 13px; height: 15px; margin: 0; color: #b5b5c8; }
.nav h4 { height: 44px; line-height: 44px; padding-left: 24px; font-size: 12px; color: #5e78fb; }
.shell-ln { stroke: #c4c4de; }
.shell-ln .dim { opacity: .45; }
.rail { width: 8px; padding-top: 111px; }
.thumb { height: 879px; border-radius: 4px; background: #9f9f9f; }

/* top bars */
.main { flex: 1; min-width: 0; display: flex; flex-direction: column; background: #e4e7f8; }
.topbar { height: 65px; flex: none; background: #fff; border-bottom: 1px solid #f0f0f2; display: flex; align-items: center; padding: 0 12px 0 31px; }
.recent { flex: 1; margin-top: -2px; font-weight: 500; color: #5b77ff; display: flex; align-items: center; }
.caret { width: 11px; height: 7px; margin: 4px 0 0 9px; background: #bcc8ff; clip-path: polygon(0 0, 100% 0, 100% 18%, 58% 100%, 42% 100%, 0 18%); }
.search { color: #9a9ea6; margin-top: -2px; }
.search-icon { width: 18px; height: 18px; color: #5b77ff; margin: 2px 22px 0 19px; }
.avatar { width: 37px; height: 37px; border-radius: 50%; background: #edf0fe; display: flex; align-items: center; justify-content: center; color: #5b77ff; }
.avatar svg { width: 13px; height: 15px; margin-top: -2px; }

.devicebar { height: 53px; flex: none; background: #fff; display: flex; align-items: center; padding: 0 21px 0 7px; box-shadow: 0 3px 12px rgba(90, 95, 150, .1); }
.os { width: 25px; height: 25px; color: #9e9e9e; }
.device { width: 295px; height: 44px; margin-left: 12px; border-right: 1px solid #ededf0; }
.device-name { font-size: 16px; font-weight: 500; line-height: 20px; margin-top: 4px; }
.device-meta { font-size: 12px; line-height: 20px; margin-top: 2px; color: #8a8a8a; display: flex; gap: 15px; }
.tools { display: flex; align-items: center; flex: 1; padding-left: 20px; margin-top: -1px; }
.tool { display: flex; align-items: center; font-size: 13px; font-weight: 500; color: #161616; height: 31px; padding-bottom: 2px; }
.tool svg { color: #5b77ff; width: 22px; height: 22px; margin: 1px 13px 0 0; }
.history { width: 127px; }
.term { width: 80px; }
.tool.term svg { width: 20px; height: 20px; margin-right: 9px; }
.diag { width: 117px; }
.tool.scripts { position: relative; width: 94px; padding-left: 8px; margin-left: 1px; background: #e4e8f7; border-radius: 4px; }
.tool.scripts svg { width: 25px; margin-right: 12px; }
.highlight { position: absolute; left: -10px; top: -15px; width: 116px; height: 56px; border: 3px solid #fb4444; box-shadow: 1px 3px 5px rgba(0, 0, 0, .45), inset 1px 3px 5px rgba(0, 0, 0, .3); }
.tooltip { position: absolute; z-index: 5; left: 10px; top: 45px; width: 74px; height: 31px; border-radius: 4px; background: rgba(84, 84, 84, .87); color: #fff; font-weight: 400; line-height: 31px; text-align: center; }
.rt { font-variant: small-caps; color: #868686; font-size: 13px; letter-spacing: -.5px; margin: -3px 8px 0 0; }
.toggle { width: 35px; height: 14px; border-radius: 7px; background: #ff9dbe; display: flex; align-items: center; justify-content: flex-end; }
.toggle i { width: 20px; height: 20px; flex: none; border-radius: 50%; background: #ff4081; box-shadow: 0 1px 3px rgba(0, 0, 0, .3); }
.heart { width: 22px; height: 22px; margin: -1px 0 0 22px; color: #a9d8ac; }
.hs { opacity: .45; }

/* dashboard grid */
.grid { flex: 1; display: grid; grid-template-columns: repeat(12, minmax(0, 1fr)); grid-template-rows: 305px 306px 165px; gap: 8px; padding: 8px 8px 0 7px; }
.card { position: relative; grid-column: span 3; background: #fff; border-radius: 4px; box-shadow: 0 2px 5px rgba(60, 60, 100, .22); display: flex; flex-direction: column; min-width: 0; }
.c-system { grid-column: span 5; }
.c-sessions { grid-column: span 4; }
.head { position: relative; height: 49px; flex: none; display: flex; align-items: center; padding: 0 6px 0 8px; border-bottom: 1px solid #efeff1; }
.hi { height: 28px; flex: none; margin: -2px 8px 0 0; }
.tall .hi { margin-top: -1px; }
.head h2 { font-size: 18px; font-weight: 500; white-space: nowrap; line-height: 22px; }
.fw, .w35 { width: 35px; }
.w32.hi { width: 32px; }
.w28.hi { width: 28px; }
.blue { color: #5b77ff; }
.c-cpu { color: #1581c3; }
.c-ram { color: #9c27b0; }
.c-disk { color: #4caf50; }
.c-net { color: #ff9800; }
.acts { margin: -1px 0 0 auto; display: flex; color: #8a8a8a; }
.acts.blue { color: #5b77ff; }
.acts svg { width: 17px; height: 17px; margin: 0 9.500px; }
.acts .w22 { width: 23px; margin: 0 6.500px; height: 19px; }
.acts .w19 { width: 17px; height: 18px; }
.acts .w14 { width: 15px; height: 15px; margin: 1px 10.500px; }
.acts .w13 { width: 13px; height: 13px; margin: 2px 11.500px; }
.acts .w20 { width: 20px; margin: 0 8px; }

.facts { display: grid; row-gap: 4px; align-content: start; font-size: 12px; line-height: 16px; }
.facts dt { color: #858585; }
.facts dd { color: #141414; }
.sys { grid-template-columns: 151.500px 1fr; padding: 8px 0 0 20px; }
.loc { grid-template-columns: 121.500px 1fr; padding: 10px 0 0 16px; height: 96px; flex: none; }
.map { width: 398px; height: 160px; display: block; border-radius: 0 4px 4px 4px; }
.road-edge { fill: none; stroke: #f2b01e; stroke-width: 3.3px; stroke-linejoin: round; }
.road-core { fill: none; stroke: #fff0ae; stroke-width: 1.2px; stroke-linejoin: round; }
.map text { fill: #1f2430; font-size: 12px; }
.map .place text { text-anchor: middle; paint-order: stroke; stroke: rgba(255, 255, 255, .5); stroke-width: 1.500px; }
.map .place .b { font-size: 13px; }
.map .place .city { font-size: 18px; font-weight: 500; }
.map .area text { fill: #1d8f49; text-anchor: middle; font-size: 13px; }
.map .shield-t text { fill: #fff; text-anchor: middle; font-size: 9.500px; font-weight: 700; }
.map .google { fill: #fff; font-size: 17px; font-weight: 500; paint-order: stroke; stroke: #7b8a83; stroke-width: 2px; }
.map .attr text { font-size: 10px; fill: #1a1a1a; }

.session { height: 49px; display: flex; align-items: center; padding: 0 6px 0 8px; border-bottom: 1px solid #efeff1; }
.who { font-weight: 500; white-space: nowrap; letter-spacing: .02px; margin-top: -2px; }

.row { display: grid; height: 48px; flex: none; align-items: center; border-bottom: 1px solid #f2f2f4; padding: 0 0 2px 8px; color: #161616; white-space: nowrap; }
.head + .row { height: 49px; }
.row b { font-weight: 500; }
.row span { text-align: right; }
.row svg { width: 12px; height: 12px; justify-self: end; margin-right: 18px; color: #fab5b0; }
.cpu .row { grid-template-columns: 1fr 40px 33px 87.500px; }
.ram .row, .dsk .row { grid-template-columns: 1fr 40px 108px 69px; }
.net .row { grid-template-columns: 1fr 40px 119px 67.500px; }
.row.entering { opacity: .86; border-color: transparent; padding: 3px 0 0 8px; }

/* performance cards */
.perf { overflow: hidden; }
.spark { position: absolute; left: 0; bottom: 0; width: 398px; height: 116px; fill: none; stroke-width: 2.2; }
.titles { overflow: hidden; height: 44px; padding-top: 1px; }
.titles h2 { line-height: 20px; }
.titles h3 { font-size: 12px; font-weight: 500; line-height: 16px; letter-spacing: .05px; color: #777; white-space: nowrap; }
.perf .hi { margin-top: -6px; }
.perf .head + .stats { position: relative; }
.stats { display: grid; grid-template-columns: 260px 122px; grid-template-rows: 40px 40px; padding: 8px 8px 0 8px; }
.p-mem .stats { grid-template-columns: 1fr; }
.three { grid-template-columns: 132.500px 141px minmax(0, 1fr); }
.p-net .three { grid-template-columns: 123.500px 125.500px minmax(0, 1fr); }
.stat { border-left: 2px solid transparent; padding-left: 4px; line-height: 20px; white-space: nowrap; }
.stat i { display: block; font-style: normal; font-size: 12px; color: #8d8d8d; }
.stat b { display: block; font-weight: 400; color: #161616; line-height: 19px; }
.p-cpu .bar { border-color: #8fc1e0; }
.p-mem .bar { border-color: #cf96da; }
.p-disk .bar { border-color: #a0d4a3; }
.p-net .bar { border-color: #ffc675; }
.p-net .dashed { border-left-style: dashed; }
.spec { display: grid; grid-template-columns: auto auto; align-content: start; grid-row: 1 / 4; grid-column: 2; font-size: 12px; line-height: 20px; white-space: nowrap; }
.three .spec { grid-column: 3; grid-template-columns: 54px minmax(0, 1fr); }
.spec dt { color: #8d8d8d; }
.spec dd { text-align: right; color: #161616; }
.p-net .spec { padding: 0 1px 0 6px; }

/* footer */
.taskbar { position: relative; height: 54px; flex: none; background: #e91e63; color: #fff; display: flex; align-items: center; padding: 0 19px; font-size: 16px; font-weight: 500; }
.ext { width: 16px; height: 16px; margin-left: 37px; }
.foot-pin { width: 13px; height: 18px; margin: 2px 0 0 auto; opacity: .5; color: #9e9e9e; }
.fab { position: absolute; right: 32px; top: -26px; width: 56px; height: 56px; border-radius: 50%; background: #5b77ff; color: #fff; box-shadow: 0 3px 8px rgba(0, 0, 0, .4); display: flex; align-items: center; justify-content: center; }
.fab svg { width: 27px; height: 28px; }
```
